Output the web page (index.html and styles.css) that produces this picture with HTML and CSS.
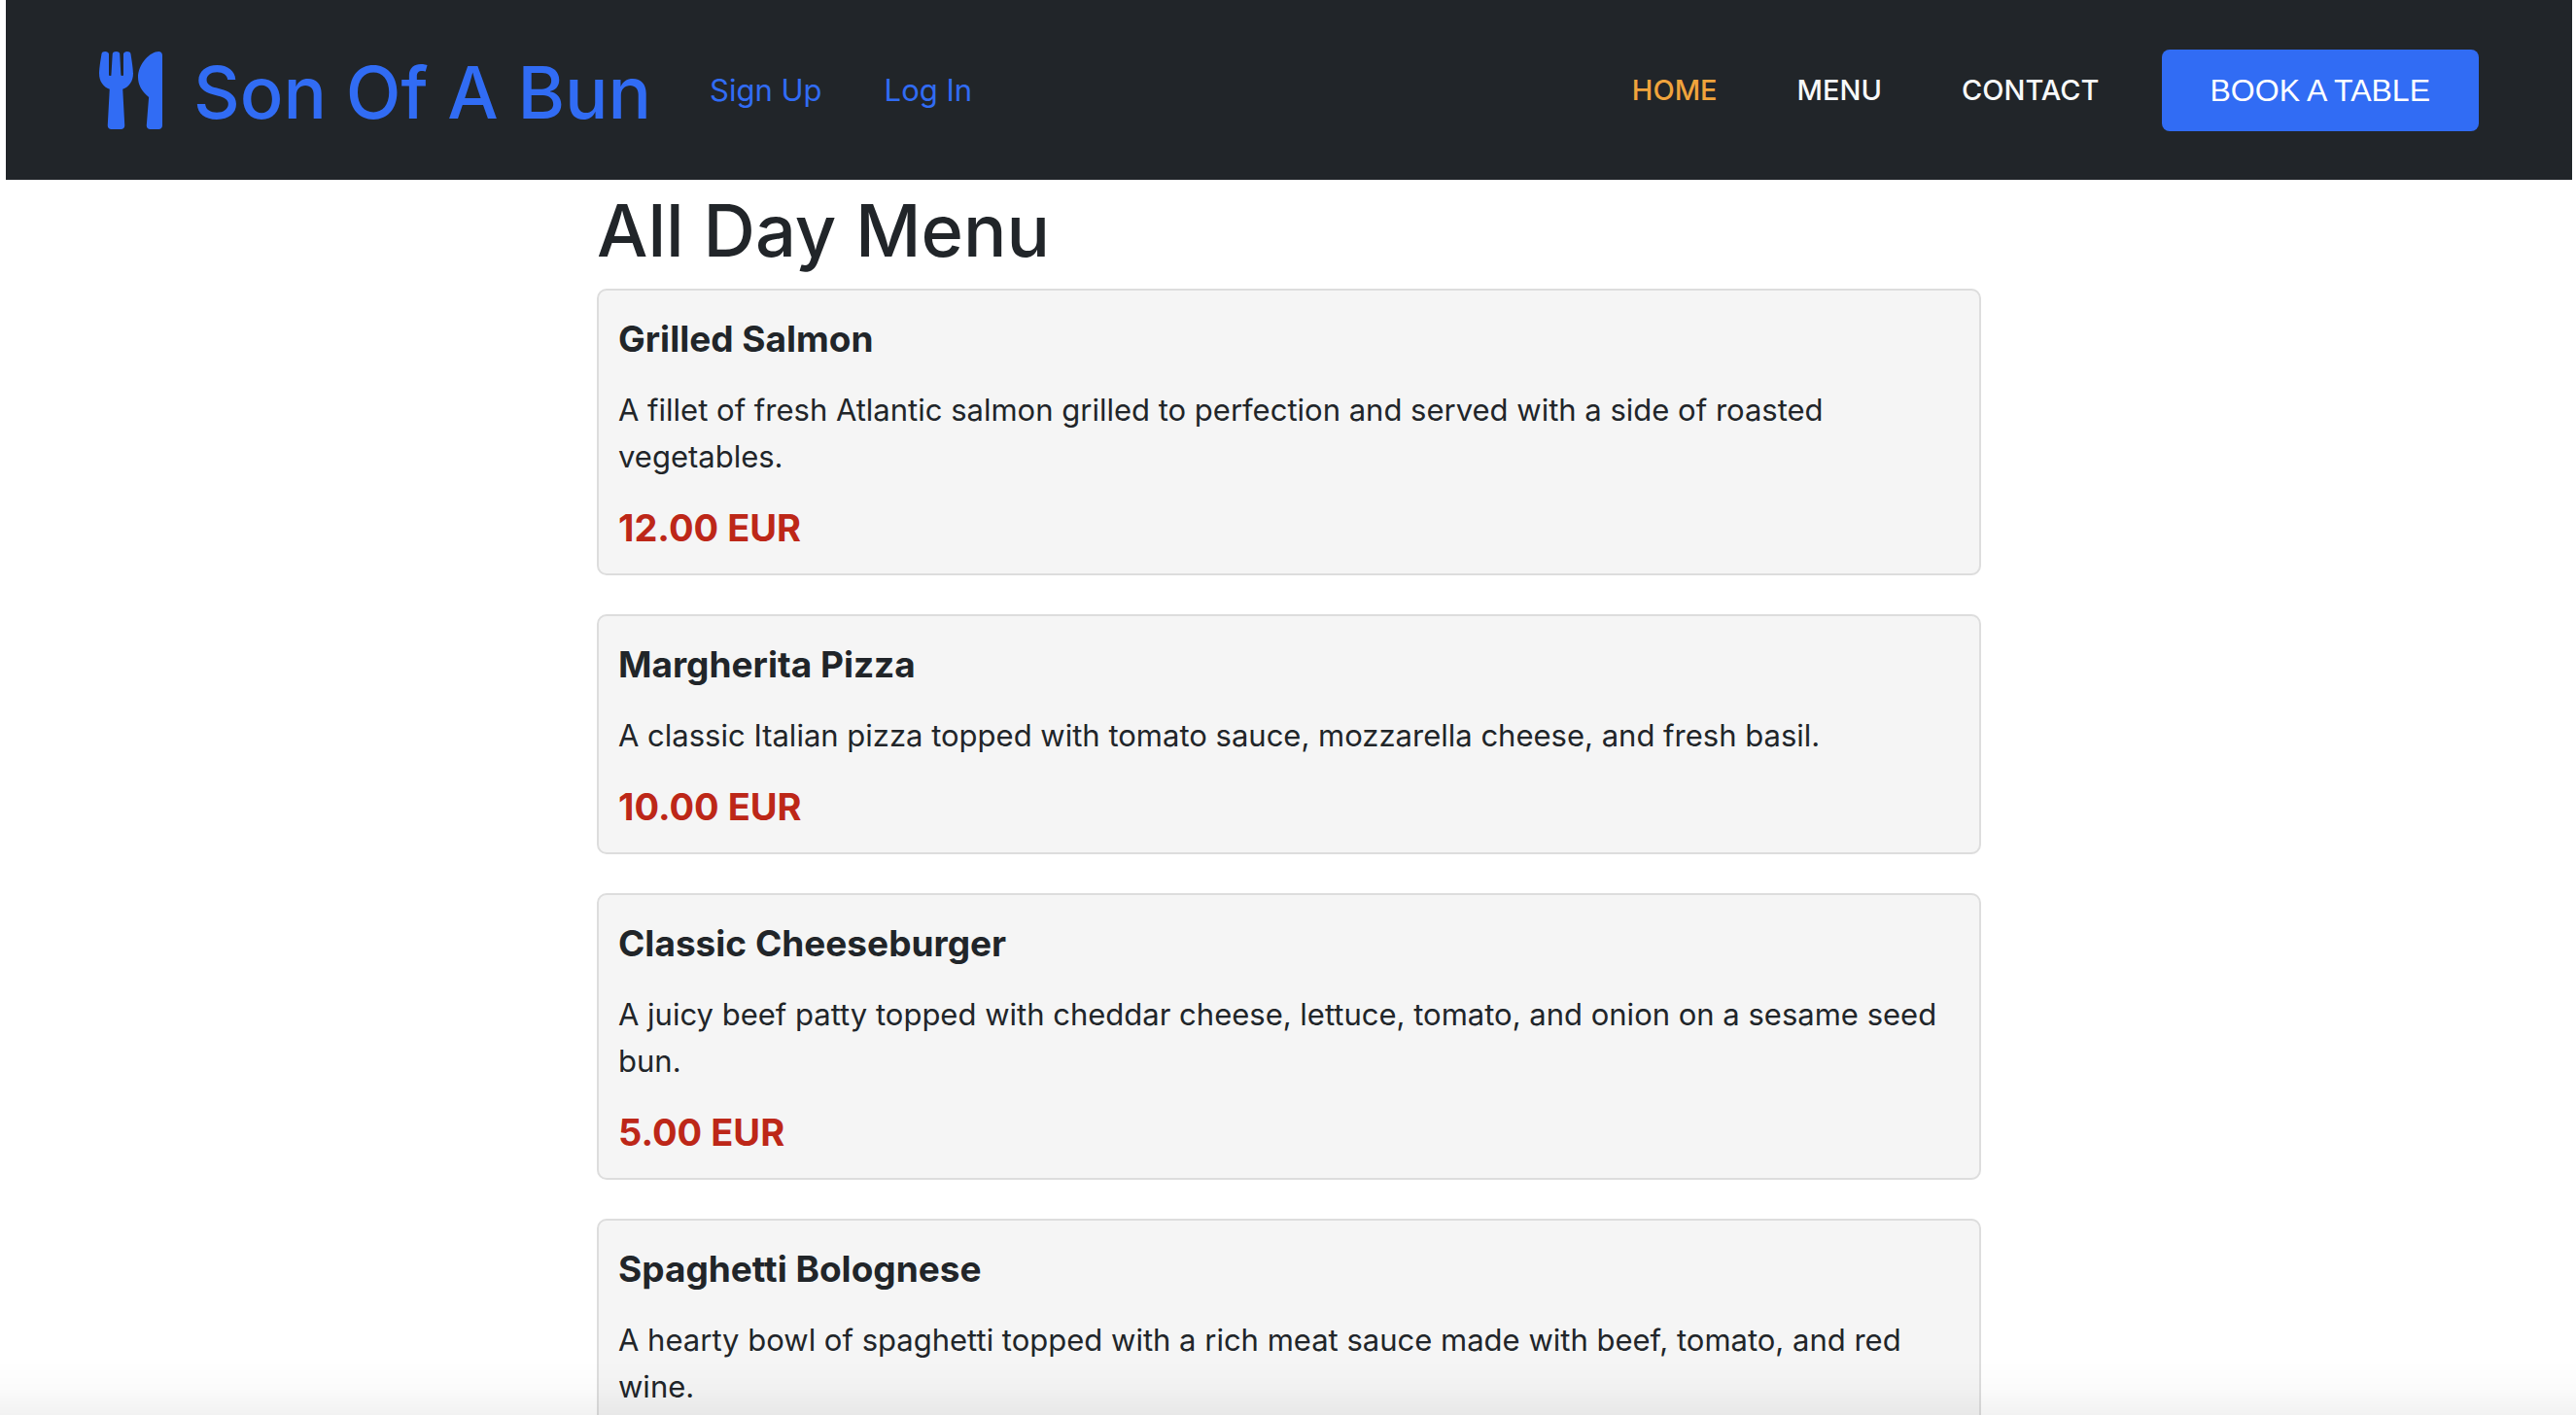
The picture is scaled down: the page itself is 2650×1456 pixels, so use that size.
FILE: index.html
```html
<!DOCTYPE html>
<html lang="en">
<head>
<meta charset="utf-8">
<title>Son Of A Bun</title>
<meta name="viewport" content="width=device-width, initial-scale=1">
<link rel="stylesheet" href="styles.css">
</head>
<body>
<header class="navbar">
  <a class="brand" href="#">
    <svg class="brand-icon" viewBox="0 0 416 512" aria-hidden="true"><path fill="currentColor" d="M207.900 15.200c.8 4.700 16.100 94.500 16.100 128.800 0 52.300-27.800 89.600-68.900 104.600L168 486.700c.7 13.700-10.200 25.300-24 25.300H80c-13.700 0-24.700-11.500-24-25.300l12.900-238.100C27.700 233.600 0 196.200 0 144 0 109.600 15.300 19.900 16.100 15.200 19.300-5.100 61.400-5.400 64 16.300v141.200c1.300 3.400 15.100 3.200 16 0 1.400-25.300 7.900-139.200 8-141.800 3.300-20.800 44.700-20.800 47.900 0 .2 2.700 6.600 116.500 8 141.800.9 3.200 14.800 3.400 16 0V16.300c2.600-21.600 44.800-21.400 48-1.100zm119.200 285.700l-15 185.100c-1.200 14 9.900 26 23.900 26h56c13.300 0 24-10.700 24-24V24c0-13.200-10.700-24-24-24-82.500 0-221.400 178.500-64.900 300.900z"/></svg>
    <span class="brand-name">Son Of A Bun</span>
  </a>
  <nav class="account" aria-label="Account">
    <a href="#">Sign Up</a>
    <a href="#">Log In</a>
  </nav>
  <nav class="main-nav" aria-label="Main">
    <a class="active" href="#">HOME</a>
    <a href="#">MENU</a>
    <a href="#">CONTACT</a>
  </nav>
  <a class="book" href="#">BOOK A TABLE</a>
</header>
<main class="menu">
  <h1>All Day Menu</h1>
  <article class="item">
    <h2>Grilled Salmon</h2>
    <p>A fillet of fresh Atlantic salmon grilled to perfection and served with a side of roasted vegetables.</p>
    <p class="price">12.00 EUR</p>
  </article>
  <article class="item">
    <h2>Margherita Pizza</h2>
    <p>A classic Italian pizza topped with tomato sauce, mozzarella cheese, and fresh basil.</p>
    <p class="price">10.00 EUR</p>
  </article>
  <article class="item">
    <h2>Classic Cheeseburger</h2>
    <p>A juicy beef patty topped with cheddar cheese, lettuce, tomato, and onion on a sesame seed bun.</p>
    <p class="price">5.00 EUR</p>
  </article>
  <article class="item">
    <h2>Spaghetti Bolognese</h2>
    <p>A hearty bowl of spaghetti topped with a rich meat sauce made with beef, tomato, and red wine.</p>
  </article>
</main>
<div class="fade"></div>
</body>
</html>
```
FILE: styles.css
```css
* { box-sizing: border-box; }
html { overflow: hidden; }
body {
  margin: 0;
  height: 100vh;
  padding: 0 4px 0 6px;
  overflow: hidden;
  font-family: Inter, "Liberation Sans", sans-serif;
  font-size: 31px;
  line-height: 48px;
  color: #212529;
  background: #fff;
}
h1, h2, p { margin: 0; }
a { text-decoration: none; }

.navbar {
  display: flex;
  align-items: center;
  padding: 44px 96px;
  background: #212529;
}
.brand {
  display: flex;
  align-items: center;
  gap: 32px;
  color: #316cf4;
}
.brand-icon { width: 65px; height: 80px; }
.brand-name { padding-top: 5px; font-size: 74px; font-weight: 500; line-height: 92px; }
.account { display: flex; gap: 64px; margin-left: 60px; padding-top: 1px; }
.account a { color: #316cf4; }
.main-nav { display: flex; gap: 82px; margin-left: auto; font-size: 29px; font-weight: 500; }
.main-nav a { color: #f8f9fa; }
.main-nav .active { color: #f0a43c; }
.book {
  margin-left: 64px;
  padding: 18px 50px;
  border-radius: 8px;
  font-family: "Liberation Sans", Arial, sans-serif;
  font-size: 32px;
  color: #fff;
  background: #316cf4;
}

.menu { width: 1424px; max-width: 100%; margin: 0 auto; }
.menu h1 { margin-bottom: 12px; padding-top: 4px; font-size: 74px; font-weight: 500; line-height: 96px; }
.item {
  margin-bottom: 40px;
  padding: 20px 20px 17px;
  border: 2px solid #ddd;
  border-radius: 10px;
  background: #f5f5f5;
}
.item h2 { margin-bottom: 19px; font-size: 37px; font-weight: 700; line-height: 60px; }
.item .price { margin-top: 19px; font-size: 38px; font-weight: 700; line-height: 60px; color: #bd2718; }

/* Soft shade along the lower edge of the window */
.fade {
  position: fixed;
  left: 0;
  right: 0;
  bottom: 0;
  height: 56px;
  background: linear-gradient(rgba(0, 0, 0, 0), rgba(0, 0, 0, 0.015) 50%, rgba(0, 0, 0, 0.05));
  pointer-events: none;
}
```
